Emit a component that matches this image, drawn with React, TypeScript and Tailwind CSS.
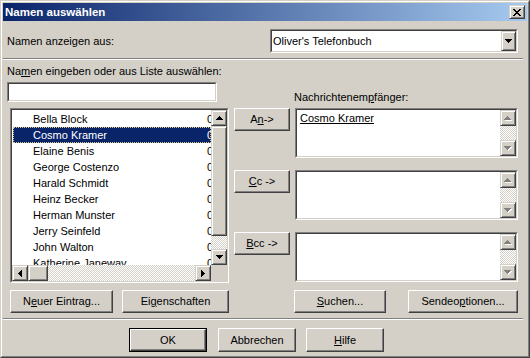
import type { ReactNode } from "react"

const names = [
  "Bella Block", "Cosmo Kramer", "Elaine Benis", "George Costenzo", "Harald Schmidt",
  "Heinz Becker", "Herman Munster", "Jerry Seinfeld", "John Walton", "Katherine Janeway",
]

const raised = "border border-t-[#d4d0c8] border-l-[#d4d0c8] border-r-[#404040] border-b-[#404040] shadow-[inset_1px_1px_#fff,inset_-1px_-1px_#808080] bg-[#d4d0c8]"
const push = "border border-t-white border-l-white border-r-[#404040] border-b-[#404040] shadow-[inset_-1px_-1px_#808080] bg-[#d4d0c8]"
const dither = "bg-[image:repeating-conic-gradient(#ffffff_0_25%,#d4d0c8_0_50%)] bg-[length:2px_2px]"

const arrows = {
  up: { w: 7, h: 4, d: "M3 0h1v1H3zM2 1h3v1H2zM1 2h5v1H1zM0 3h7v1H0z" },
  down: { w: 7, h: 4, d: "M0 0h7v1H0zM1 1h5v1H1zM2 2h3v1H2zM3 3h1v1H3z" },
  left: { w: 4, h: 7, d: "M0 3h1v1H0zM1 2h1v3H1zM2 1h1v5H2zM3 0h1v7H3z" },
  right: { w: 4, h: 7, d: "M0 0h1v7H0zM1 1h1v5H1zM2 2h1v3H2zM3 3h1v1H3z" },
}

function Arrow({ dir, off }: { dir: keyof typeof arrows; off?: boolean }) {
  const a = arrows[dir]
  if (off) {
    return (
      <svg width={a.w + 1} height={a.h + 1} shapeRendering="crispEdges">
        <path d={a.d} fill="#fff" transform="translate(1 1)" />
        <path d={a.d} fill="#808080" />
      </svg>
    )
  }
  return (
    <svg width={a.w} height={a.h} shapeRendering="crispEdges">
      <path d={a.d} fill="#000" />
    </svg>
  )
}

function ScrollBtn({ dir, off, className = "" }: { dir: keyof typeof arrows; off?: boolean; className?: string }) {
  return (
    <div className={`${raised} flex items-center justify-center shrink-0 ${className}`}>
      <Arrow dir={dir} off={off} />
    </div>
  )
}

function Sunken({ className = "", children }: { className?: string; children?: ReactNode }) {
  return (
    <div className={`border border-t-[#808080] border-l-[#808080] border-r-white border-b-white ${className}`}>
      <div className="w-full h-full border border-t-[#404040] border-l-[#404040] border-r-[#d4d0c8] border-b-[#d4d0c8] bg-white overflow-hidden">
        {children}
      </div>
    </div>
  )
}

function Btn({ className = "", children }: { className?: string; children: ReactNode }) {
  return <div className={`${push} h-[23px] flex items-center justify-center shrink-0 ${className}`}>{children}</div>
}

function Recipients({ children }: { children?: ReactNode }) {
  return (
    <Sunken className="h-[50px] w-full">
      <div className="flex h-full">
        <div className="flex-1 pl-[3px] pt-[1px] leading-[14px]">{children}</div>
        <div className="w-[16px] flex flex-col">
          <ScrollBtn dir="up" off className="h-[16px]" />
          <div className={`flex-1 ${dither}`} />
          <ScrollBtn dir="down" off className="h-[16px]" />
        </div>
      </div>
    </Sunken>
  )
}

export default function App() {
  return (
    <div className="w-[530px] h-[358px] border border-t-[#d4d0c8] border-l-[#d4d0c8] border-r-[#404040] border-b-[#404040] bg-[#d4d0c8] font-['Liberation_Sans',Arial,sans-serif] text-[11px] leading-[13px] text-black select-none">
      <div className="h-full border border-t-white border-l-white border-r-[#808080] border-b-[#808080] p-[1px] flex flex-col">
        {/* title bar */}
        <div className="h-[18px] shrink-0 flex items-center justify-between pl-[2px] pr-[2px] bg-[linear-gradient(to_right,#0a246a,#a6caf0)]">
          <span className="text-white font-bold text-[11.5px]">Namen auswählen</span>
          <div className={`${raised} w-[16px] h-[14px] flex items-center justify-center`}>
            <svg width="8" height="7" shapeRendering="crispEdges">
              <path fill="#000" d="M0 0h2v1H0zM6 0h2v1H6zM1 1h2v1H1zM5 1h2v1H5zM2 2h4v1H2zM3 3h2v1H3zM2 4h4v1H2zM1 5h2v1H1zM5 5h2v1H5zM0 6h2v1H0zM6 6h2v1H6z" />
            </svg>
          </div>
        </div>

        {/* address book */}
        <div className="mt-[8px] h-[24px] flex items-center pl-[4px] pr-[9px]">
          <span>Namen anzei<u>g</u>en aus:</span>
          <Sunken className="ml-auto w-[248px] h-[24px]">
            <div className="flex items-center h-full">
              <span className="flex-1 pl-[1px]">Oliver's Telefonbuch</span>
              <ScrollBtn dir="down" className="w-[15px] h-full" />
            </div>
          </Sunken>
        </div>

        <div className="mt-[5px] mr-[4px] h-[2px] border-t border-t-[#808080] border-b border-b-white" />

        <div className="flex">
          {/* names */}
          <div className="w-[226px] pl-[4px] flex flex-col">
            <span className="mt-[5px]">Na<u>m</u>en eingeben oder aus Liste auswählen:</span>
            <Sunken className="mt-[4px] w-[210px] h-[20px]" />
            <Sunken className="mt-[6px] ml-[3px] w-[219px] h-[175px]">
              <div className="grid grid-cols-[199px_16px] grid-rows-[155px_16px] h-full">
                <div className="overflow-hidden pt-[1px] leading-[16px]">
                  {names.map((n) => {
                    const sel = n === "Cosmo Kramer"
                    return (
                      <div
                        key={n}
                        className={`ml-[1px] w-[198px] h-[16px] flex overflow-hidden whitespace-nowrap ${sel ? "bg-[#0a246a] text-white outline-1 outline-dotted outline-offset-[-1px] outline-[#d8c880]" : ""}`}
                      >
                        <span className="w-[194px] shrink-0 pl-[20px]">{n}</span>
                        <span>0221 4711</span>
                      </div>
                    )
                  })}
                </div>
                <div className="flex flex-col bg-[#d4d0c8]">
                  <ScrollBtn dir="up" className="h-[16px]" />
                  <div className={`${raised} h-[110px]`} />
                  <div className={`flex-1 ${dither}`} />
                  <ScrollBtn dir="down" className="h-[16px]" />
                </div>
                <div className="flex bg-[#d4d0c8]">
                  <ScrollBtn dir="left" className="w-[16px]" />
                  <div className={`${raised} w-[20px]`} />
                  <div className={`flex-1 ${dither}`} />
                  <ScrollBtn dir="right" className="w-[16px]" />
                </div>
                <div className="bg-[#d4d0c8]" />
              </div>
            </Sunken>
          </div>

          {/* to / cc / bcc */}
          <div className="ml-[5px] w-[56px] pt-[48px] flex flex-col gap-[39px]">
            <Btn className="w-full">A<u>n</u> -&gt;</Btn>
            <Btn className="w-full"><u>C</u>c -&gt;</Btn>
            <Btn className="w-full"><u>B</u>cc -&gt;</Btn>
          </div>

          <div className="ml-[5px] w-[223px] flex flex-col">
            <span className="mt-[31px] -ml-[1px]">Nachrichtenem<u>p</u>fänger:</span>
            <div className="mt-[4px] flex flex-col gap-[12px]">
              <Recipients>
                <span className="underline">Cosmo Kramer</span>
              </Recipients>
              <Recipients />
              <Recipients />
            </div>
          </div>
        </div>

        <div className="mt-[7px] flex">
          <Btn className="ml-[7px] w-[103px]">N<u>e</u>uer Eintrag...</Btn>
          <Btn className="ml-[9px] w-[107px]">Ei<u>g</u>enschaften</Btn>
          <Btn className="ml-[65px] w-[92px]"><u>S</u>uchen...</Btn>
          <Btn className="ml-[22px] w-[110px]">Sendeo<u>p</u>tionen...</Btn>
        </div>

        <div className="mt-[5px] mr-[4px] h-[2px] border-t border-t-[#808080] border-b border-b-white" />

        <div className="mt-[8px] flex">
          <div className="ml-[126px] w-[78px] h-[24px] border border-black">
            <div className={`${push} h-full flex items-center justify-center`}>OK</div>
          </div>
          <Btn className="ml-[11px] w-[78px] h-[24px]">Abbrechen</Btn>
          <Btn className="ml-[10px] w-[78px] h-[24px]"><u>H</u>ilfe</Btn>
        </div>
      </div>
    </div>
  )
}
